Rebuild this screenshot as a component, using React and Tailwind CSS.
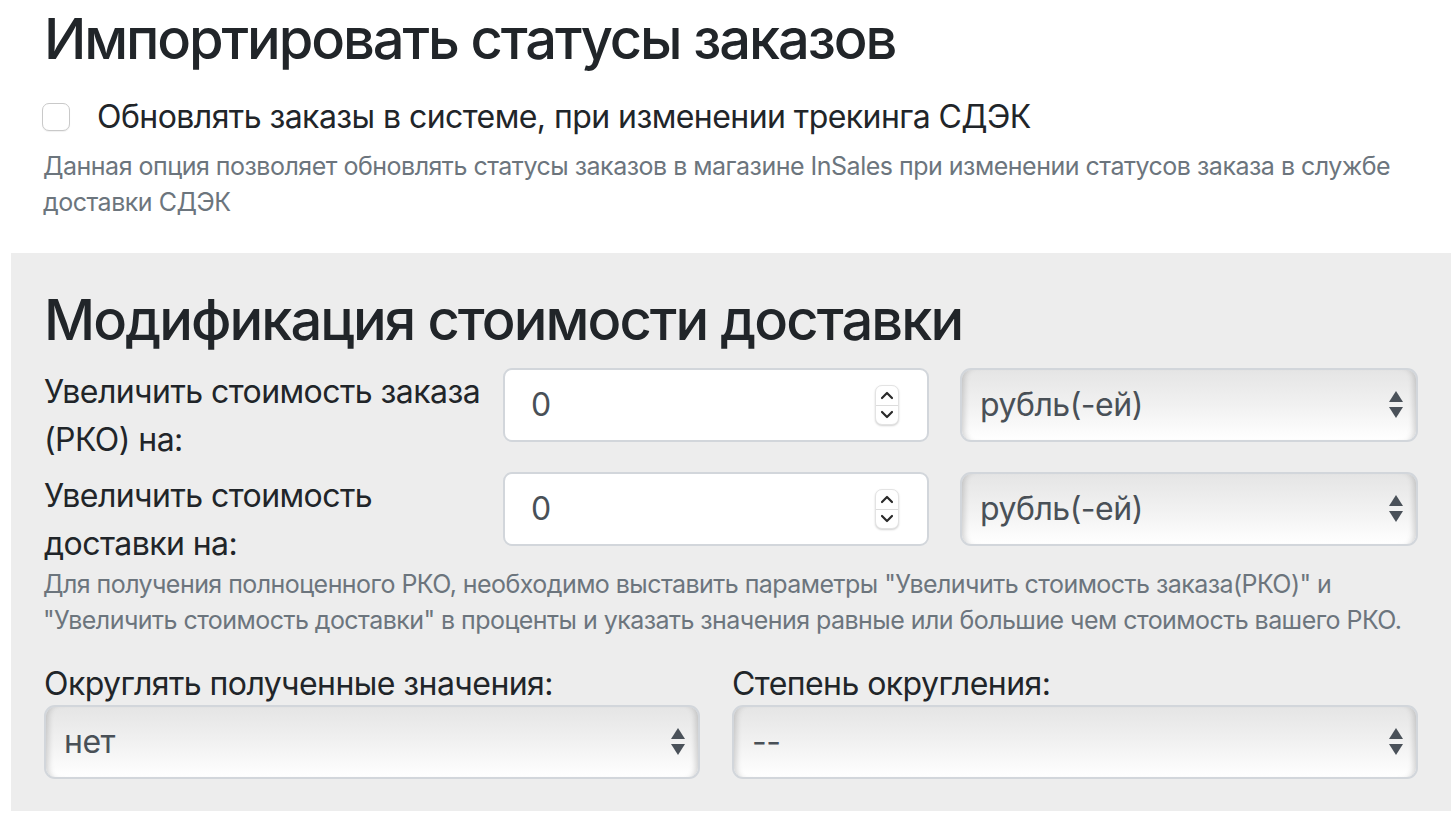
import React from 'react';

// Двойная стрелка справа в нативном селекте
const SelectArrows = () => (
  <svg width="16" height="30" viewBox="0 0 16 30" className="shrink-0">
    <path d="M8 1 L15 12 L1 12 Z" fill="#4a5159" />
    <path d="M1 17 L15 17 L8 28 Z" fill="#4a5159" />
  </svg>
);

// Кнопки шага у числового поля
const Spinner = () => (
  <div className="flex flex-col w-[24px] h-[40px] rounded-[7px] bg-white border border-[#e3e3e3] shadow-[0_1px_2px_rgba(0,0,0,0.18)] overflow-hidden">
    <div className="flex-1 flex items-center justify-center border-b border-[#dcdcdc]">
      <svg width="14" height="9" viewBox="0 0 14 9">
        <path d="M2 7 L7 2 L12 7" fill="none" stroke="#2a2a2a" strokeWidth="2.2" strokeLinecap="round" strokeLinejoin="round" />
      </svg>
    </div>
    <div className="flex-1 flex items-center justify-center">
      <svg width="14" height="9" viewBox="0 0 14 9">
        <path d="M2 2 L7 7 L12 2" fill="none" stroke="#2a2a2a" strokeWidth="2.2" strokeLinecap="round" strokeLinejoin="round" />
      </svg>
    </div>
  </div>
);

const NumberInput = ({ value }) => (
  <div className="w-[426px] h-[74px] flex items-center justify-between pl-[26px] pr-[28px] bg-white border-2 border-[#d2d6db] rounded-[9px]">
    <span className="text-[32px] text-[#495057]">{value}</span>
    <Spinner />
  </div>
);

const FakeSelect = ({ value, width }) => (
  <div
    className={`${width} h-[74px] flex items-center justify-between pl-[18px] pr-[12px] rounded-[11px] border-2 border-[#d2d6db] bg-linear-to-b from-[#e5e5e5] via-[#f1f1f1] to-white shadow-[inset_7px_0_6px_-5px_rgba(0,0,0,0.18),inset_-7px_0_6px_-5px_rgba(0,0,0,0.18)]`}
  >
    <span className="text-[32px] tracking-[-0.5px] text-[#495057]">{value}</span>
    <SelectArrows />
  </div>
);

export default function App() {
  return (
    <div className="w-[1456px] h-[822px] bg-white text-[#212529] overflow-hidden font-['Inter','Noto_Sans',sans-serif] tracking-[-0.56px]">
      {/* --- Импорт статусов --- */}
      <div className="pl-[44px] pt-[6px]">
        <h3 className="text-[56px] font-medium leading-[67px] tracking-[-2.1px]">Импортировать статусы заказов</h3>
        <label className="flex items-center gap-[27px] mt-[20px] h-[48px]">
          <span className="w-[28px] h-[28px] -ml-[2px] rounded-[7px] border border-[#c9c9c9] bg-white shadow-[0_1px_1px_rgba(0,0,0,0.06)]" />
          <span className="text-[32px] leading-[48px]">Обновлять заказы в системе, при изменении трекинга СДЭК</span>
        </label>
        <p className="mt-[7px] text-[25px] leading-[36px] tracking-[-0.5px] text-[#6c757d] -ml-[1px]">
          <span className="block whitespace-nowrap">Данная опция позволяет обновлять статусы заказов в магазине InSales при изменении статусов заказа в службе</span>
          <span className="block whitespace-nowrap">доставки СДЭК</span>
        </p>
      </div>

      {/* --- Модификация стоимости --- */}
      <div className="ml-[11px] mt-[33px] w-[1440px] h-[558px] bg-[#ededed] pl-[33px] pt-[34px]">
        <h3 className="text-[56px] font-medium leading-[67px] tracking-[-1.9px]">Модификация стоимости доставки</h3>

        <div className="mt-[14px] flex items-start gap-[31px]">
          <div className="w-[428px] text-[32px] leading-[48px]">
            <span className="block whitespace-nowrap">Увеличить стоимость заказа</span>
            <span className="block">(РКО) на:</span>
          </div>
          <NumberInput value="0" />
          <FakeSelect value="рубль(-ей)" width="w-[458px]" />
        </div>

        <div className="mt-[8px] flex items-start gap-[31px]">
          <div className="w-[428px] text-[32px] leading-[48px]">
            <span className="block">Увеличить стоимость</span>
            <span className="block">доставки на:</span>
          </div>
          <NumberInput value="0" />
          <FakeSelect value="рубль(-ей)" width="w-[458px]" />
        </div>

        <p className="-mt-[2px] text-[25px] leading-[36px] tracking-[-0.55px] text-[#6c757d] -ml-[1px]">
          <span className="block whitespace-nowrap">Для получения полноценного РКО, необходимо выставить параметры "Увеличить стоимость заказа(РКО)" и</span>
          <span className="block whitespace-nowrap">"Увеличить стоимость доставки" в проценты и указать значения равные или большие чем стоимость вашего РКО.</span>
        </p>

        <div className="mt-[24px] flex gap-[32px]">
          <div className="w-[656px]">
            <div className="text-[32px] leading-[43px]">Округлять полученные значения:</div>
            <FakeSelect value="нет" width="w-[656px]" />
          </div>
          <div className="w-[686px]">
            <div className="text-[32px] leading-[43px]">Степень округления:</div>
            <FakeSelect value="--" width="w-[686px]" />
          </div>
        </div>
      </div>
    </div>
  );
}
